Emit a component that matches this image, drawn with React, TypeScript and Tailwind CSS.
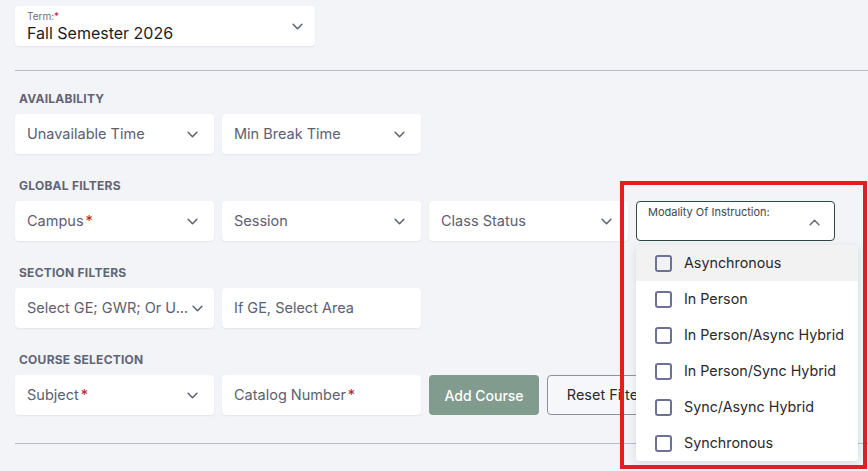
import React from "react";

const font = { fontFamily: "Inter, 'Noto Sans', sans-serif" };

function Chevron({ up = false, className = "" }: { up?: boolean; className?: string }) {
  return (
    <svg viewBox="0 0 12 8" className={`h-[7px] w-[11px] ${className}`} fill="none">
      <path
        d={up ? "M1 6.5 6 1.5l5 5" : "M1 1.5l5 5 5-5"}
        stroke="currentColor"
        strokeWidth="1.8"
        strokeLinecap="round"
        strokeLinejoin="round"
      />
    </svg>
  );
}

function Field({ label, required = false, chevron = true }: { label: string; required?: boolean; chevron?: boolean }) {
  return (
    <div className="flex h-[40px] w-[199px] items-center justify-between gap-[4px] rounded-[4px] bg-white pl-[12px] pr-[16px] shadow-[0_1px_2px_rgba(30,35,60,0.07)]">
      <span className="whitespace-nowrap text-[14.5px] text-[#5d6070]">
        {label}
        {required && <span className="ml-[2px] text-[#b3262e]">*</span>}
      </span>
      {chevron && <Chevron className="shrink-0 text-[#5f6272]" />}
    </div>
  );
}

function SectionLabel({ children, first = false }: { children: React.ReactNode; first?: boolean }) {
  return (
    <div
      className={`mb-[7px] pl-[4px] text-[12px] font-bold leading-[16px] tracking-[0.02em] text-[#626575] ${first ? "mt-[20px]" : "mt-[24px]"}`}
    >
      {children}
    </div>
  );
}

const modalities = [
  "Asynchronous",
  "In Person",
  "In Person/Async Hybrid",
  "In Person/Sync Hybrid",
  "Sync/Async Hybrid",
  "Synchronous",
];

export default function App() {
  return (
    <div className="relative h-[471px] w-[868px] overflow-hidden bg-[#f3f4f8]" style={font}>
      <div className="pl-[15px] pt-[6px]">
        <div className="flex h-[40px] w-[300px] items-center justify-between rounded-[4px] bg-white pl-[12px] pr-[12px] shadow-[0_1px_2px_rgba(30,35,60,0.07)]">
          <div className="flex flex-col pt-[1px]">
            <span className="text-[10px] leading-[12px] text-[#6b6e7a]">
              Term:<span className="text-[#b3262e]">*</span>
            </span>
            <span className="text-[16px] leading-[22px] text-[#1c1c1f]">Fall Semester 2026</span>
          </div>
          <Chevron className="text-[#5f6272]" />
        </div>

        <div className="mt-[24px] border-t border-[#b8bbc6]" />

        <SectionLabel first>AVAILABILITY</SectionLabel>
        <div className="flex gap-[8px]">
          <Field label="Unavailable Time" />
          <Field label="Min Break Time" />
        </div>

        <SectionLabel>GLOBAL FILTERS</SectionLabel>
        <div className="flex gap-[8px]">
          <Field label="Campus" required />
          <Field label="Session" />
          <Field label="Class Status" />
          <div className="relative">
            <div className="flex h-[40px] w-[199px] items-start justify-between rounded-[4px] border border-[#2e4a42] bg-white pl-[11px] pr-[14px] pt-[3px]">
              <span className="text-[11px] leading-[14px] text-[#3d4848]">Modality Of Instruction:</span>
              <Chevron up className="mt-[14px] text-[#6b6e78]" />
            </div>
            <div className="absolute left-0 top-[44px] z-10 w-[222px] overflow-hidden rounded-[4px] bg-white shadow-[0_2px_8px_rgba(30,35,60,0.12)]">
              {modalities.map((m, i) => (
                <div
                  key={m}
                  className={`flex h-[36px] items-center gap-[12px] pl-[19px] ${i === 0 ? "bg-[#f3f2f3]" : "bg-white"}`}
                >
                  <span className="h-[17px] w-[17px] rounded-[3px] border-2 border-[#6e7197]" />
                  <span className="text-[14.3px] text-[#2a2a2e]">{m}</span>
                </div>
              ))}
            </div>
          </div>
        </div>

        <SectionLabel>SECTION FILTERS</SectionLabel>
        <div className="flex gap-[8px]">
          <Field label="Select GE; GWR; Or U..." />
          <Field label="If GE, Select Area" chevron={false} />
        </div>

        <SectionLabel>COURSE SELECTION</SectionLabel>
        <div className="flex gap-[8px]">
          <Field label="Subject" required />
          <Field label="Catalog Number" required chevron={false} />
          <button className="h-[40px] w-[110px] rounded-[4px] bg-[#819b8e] text-[14px] font-medium text-white">
            Add Course
          </button>
          <button className="h-[40px] w-[124px] rounded-[4px] border border-[#8e919c] bg-[#f6f7fa] text-[14.5px] text-[#2a2a2e]">
            Reset Filters
          </button>
        </div>

        <div className="mt-[28px] border-t border-[#b7b9cc]" />
      </div>

      <div className="pointer-events-none absolute left-[620px] top-[181px] z-20 h-[288px] w-[247px] border-4 border-[#e01f22]" />
    </div>
  );
}
